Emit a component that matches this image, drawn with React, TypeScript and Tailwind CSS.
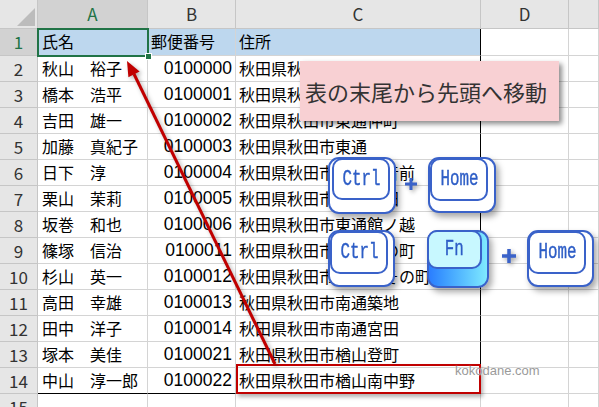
import { ReactNode } from 'react';

type Row = { name: string; zip: string; addr: string };

const data: Row[] = [
  { name: '秋山　裕子', zip: '0100000', addr: '秋田県秋田市' },
  { name: '橋本　浩平', zip: '0100001', addr: '秋田県秋田市中通' },
  { name: '吉田　雄一', zip: '0100002', addr: '秋田県秋田市東通仲町' },
  { name: '加藤　真紀子', zip: '0100003', addr: '秋田県秋田市東通' },
  { name: '日下　淳', zip: '0100004', addr: '秋田県秋田市東通観音前' },
  { name: '栗山　茉莉', zip: '0100005', addr: '秋田県秋田市東通明田' },
  { name: '坂巻　和也', zip: '0100006', addr: '秋田県秋田市東通館ノ越' },
  { name: '篠塚　信治', zip: '0100011', addr: '秋田県秋田市南通亀の町' },
  { name: '杉山　英一', zip: '0100012', addr: '秋田県秋田市南通みその町' },
  { name: '高田　幸雄', zip: '0100013', addr: '秋田県秋田市南通築地' },
  { name: '田中　洋子', zip: '0100014', addr: '秋田県秋田市南通宮田' },
  { name: '塚本　美佳', zip: '0100021', addr: '秋田県秋田市楢山登町' },
  { name: '中山　淳一郎', zip: '0100022', addr: '秋田県秋田市楢山南中野' },
];

function Head({ children, active }: { children?: ReactNode; active?: boolean }) {
  return (
    <div
      className={
        active
          ? 'flex items-center justify-center border-r border-b border-[#c6c6c6] bg-[#d2d2d2] text-[17px] text-[#217346]'
          : 'flex items-center justify-center border-r border-b border-[#c6c6c6] bg-[#e6e6e6] text-[17px] text-[#333]'
      }
    >
      {children}
    </div>
  );
}

function Cell({ children, className }: { children?: ReactNode; className: string }) {
  return <div className={'whitespace-nowrap border-b border-r text-[16px] leading-[25px] ' + className}>{children}</div>;
}

function Plus({ className }: { className: string }) {
  return (
    <svg viewBox="0 0 16 16" className={'absolute drop-shadow-[2px_2px_2px_rgba(0,0,0,0.35)] ' + className}>
      <rect x="6" y="0" width="4" height="16" fill="#3a62c9" />
      <rect x="0" y="6" width="16" height="4" fill="#3a62c9" />
    </svg>
  );
}

function Key({ label, outer, face, fn }: { label: string; outer: string; face: string; fn?: boolean }) {
  return (
    <div
      className={
        fn
          ? 'absolute rounded-[11px] border-2 border-[#3a62c9] bg-gradient-to-r from-[#2b7dff] to-[#7fe9ff] shadow-[3px_4px_6px_rgba(0,0,0,0.35)] ' + outer
          : 'absolute rounded-[11px] border-2 border-[#3a62c9] bg-white shadow-[3px_4px_6px_rgba(0,0,0,0.35)] ' + outer
      }
    >
      <div
        className={
          (fn ? 'bg-[#c8f8ff] ' : 'bg-white ') +
          'absolute flex items-center justify-center rounded-[10px] border-2 border-[#3a62c9] ' +
          face
        }
      >
        <span className="inline-block scale-x-[0.72] font-['Liberation_Mono',monospace] text-[22px] text-[#2d5dc6] [-webkit-text-stroke:0.4px_#2d5dc6]">
          {label}
        </span>
      </div>
    </div>
  );
}

export default function App() {
  return (
    <div className="relative h-[407px] w-[599px] overflow-hidden bg-white font-['Noto_Sans_CJK_JP',sans-serif] text-black">
      <div className="grid grid-cols-[38px_110px_88px_245px_88px_1fr] grid-rows-[29px_27px_repeat(14,26px)]">
        <div className="relative border-r border-b border-[#c6c6c6] bg-[#e6e6e6]">
          <svg className="absolute left-[17px] top-[8px] h-[18px] w-[18px]" viewBox="0 0 18 18">
            <polygon points="18,0 18,18 0,18" fill="#bcbcbc" />
          </svg>
        </div>
        <Head active>A</Head>
        <Head>B</Head>
        <Head>C</Head>
        <Head>D</Head>
        <Head />

        <Head active>1</Head>
        <Cell className="border-[#d4d4d4] bg-[#bdd7ee] pl-[4px]">氏名</Cell>
        <Cell className="border-[#d4d4d4] bg-[#bdd7ee] pl-[3px]">郵便番号</Cell>
        <Cell className="border-b-[#d4d4d4] border-r-black bg-[#bdd7ee] pl-[3px]">住所</Cell>
        <Cell className="border-[#d4d4d4]" />
        <Cell className="border-[#d4d4d4]" />

        {data.map((r, i) => {
          const last = i === data.length - 1;
          return [
            <Head key={'h' + i}>{i + 2}</Head>,
            <Cell key={'a' + i} className={last ? 'border-r-[#d4d4d4] border-b-black pl-[4px]' : 'border-[#d4d4d4] pl-[4px]'}>
              {r.name}
            </Cell>,
            <Cell
              key={'b' + i}
              className={
                last
                  ? 'border-r-[#d4d4d4] border-b-black pr-[3px] text-right font-["Liberation_Sans",sans-serif] text-[17.5px]'
                  : 'border-[#d4d4d4] pr-[3px] text-right font-["Liberation_Sans",sans-serif] text-[17.5px]'
              }
            >
              {r.zip}
            </Cell>,
            <Cell key={'c' + i} className={last ? 'border-black pl-[3px]' : 'border-b-[#d4d4d4] border-r-black pl-[3px]'}>
              {r.addr}
            </Cell>,
            <Cell key={'d' + i} className="border-[#d4d4d4]" />,
            <Cell key={'e' + i} className="border-[#d4d4d4]" />,
          ];
        })}

        <Head>15</Head>
        <Cell className="border-[#d4d4d4]" />
        <Cell className="border-[#d4d4d4]" />
        <Cell className="border-[#d4d4d4]" />
        <Cell className="border-[#d4d4d4]" />
        <Cell className="border-[#d4d4d4]" />
      </div>

      {/* selected cell A1 */}
      <div className="absolute left-[37px] top-[28px] h-[29px] w-[112px] border-2 border-[#217346]" />
      <div className="absolute left-[145px] top-[53px] h-[7px] w-[7px] border border-white bg-[#217346]" />

      {/* last cell highlight */}
      <div className="absolute left-[236px] top-[364px] h-[30px] w-[245px] border-2 border-[#c00000] shadow-[2px_3px_4px_rgba(0,0,0,0.3)]" />

      {/* arrow */}
      <svg className="absolute left-0 top-0 h-[407px] w-[599px] drop-shadow-[2px_2px_2px_rgba(0,0,0,0.3)]" viewBox="0 0 599 407">
        <line x1="275" y1="364" x2="134" y2="74" stroke="#c00000" strokeWidth="3" />
        <polygon points="127,61 139.6,71.6 128.4,77.2" fill="#c00000" />
      </svg>

      {/* callout */}
      <div className="absolute left-[300px] top-[61px] flex h-[60px] w-[259px] items-center bg-[#f8d0d3] pl-[5px] text-[22px] text-[#333] shadow-[3px_3px_5px_rgba(0,0,0,0.45)]">
        表の末尾から先頭へ移動
      </div>

      {/* keys */}
      <Key label="Ctrl" outer="left-[328px] top-[157px] h-[57px] w-[68px]" face="left-[2px] top-[-1px] h-[42px] w-[58px]" />
      <Plus className="left-[405px] top-[178px] h-[12px] w-[12px]" />
      <Key label="Home" outer="left-[428px] top-[157px] h-[56px] w-[68px]" face="left-[0px] top-[-1px] h-[43px] w-[58px]" />

      <Key label="Ctrl" outer="left-[328px] top-[230px] h-[57px] w-[67px]" face="left-[0px] top-[-1px] h-[43px] w-[58px]" />
      <Key label="Fn" fn outer="left-[427px] top-[230px] h-[58px] w-[62px]" face="left-[-2px] top-[-2px] h-[39px] w-[55px]" />
      <Plus className="left-[502px] top-[249px] h-[14px] w-[14px]" />
      <Key label="Home" outer="left-[527px] top-[230px] h-[57px] w-[67px]" face="left-[-1px] top-[-1px] h-[43px] w-[58px]" />

      {/* watermark */}
      <div className="absolute left-[455px] top-[361px] font-['Liberation_Sans',sans-serif] text-[13px] text-[#9a9a9a] [text-shadow:0_0_2px_#fff]">
        kokodane.com
      </div>
    </div>
  );
}
